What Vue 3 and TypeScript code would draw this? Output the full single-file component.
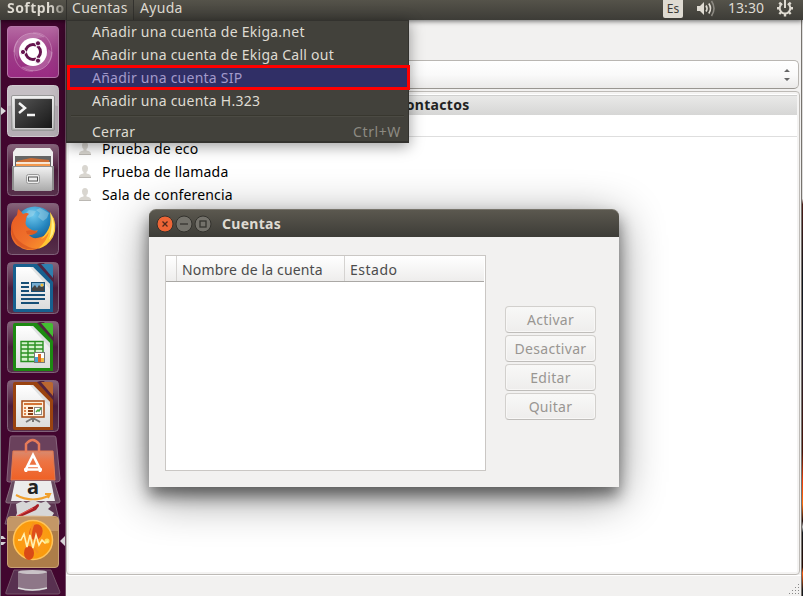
<script setup lang="ts">
interface MenuItem {
  label: string
  active?: boolean
}

const menuItems: MenuItem[] = [
  { label: 'Añadir una cuenta de Ekiga.net' },
  { label: 'Añadir una cuenta de Ekiga Call out' },
  { label: 'Añadir una cuenta SIP', active: true },
  { label: 'Añadir una cuenta H.323' },
]
const contacts: string[] = ['Prueba de eco', 'Prueba de llamada', 'Sala de conferencia']
const actions: string[] = ['Activar', 'Desactivar', 'Editar', 'Quitar']
const documents = [
  { kind: 'writer', edge: '#17608f', light: '#2f7fae' },
  { kind: 'calc', edge: '#1d8a12', light: '#43bd31' },
  { kind: 'impress', edge: '#9a4310', light: '#bb6730' },
]
</script>

<template>
  <div class="desktop">
    <header class="panel">
      <span class="app-title">Softpho</span>
      <span class="tab open">Cuentas</span>
      <span class="tab">Ayuda</span>
      <span class="spacer"></span>
      <span class="lang">Es</span>
      <svg class="speaker" width="20" height="18" viewBox="0 0 20 18">
        <path d="M1 6h3l4-4v13l-4-4H1z" fill="#dfdbd2" />
        <path d="M10 5.500q2 3 0 6M12.800 3.500q3.400 5 0 10" fill="none" stroke="#dfdbd2" stroke-width="1.700" />
        <path d="M15.500 1q5 7.500 0 15" fill="none" stroke="#8c8982" stroke-width="1.600" />
      </svg>
      <span class="clock">13:30</span>
      <svg class="gear" width="18" height="18" viewBox="0 0 18 18">
        <g fill="none" stroke="#dfdbd2">
          <path d="M6.200 3.700a5.300 5.300 0 1 0 5.600 0" stroke-width="2" />
          <path d="M9 0v8" stroke-width="2" />
          <path d="M1 8.300h3M14 8.300h3M9 13.500v3M3.300 14l2-2M14.700 14l-2-2M3.300 2.600l2 2M14.700 2.600l-2 2" stroke-width="2.400" />
        </g>
      </svg>
    </header>

    <div class="body">
      <nav class="launcher">
        <svg width="0" height="0" class="defs">
          <defs>
            <linearGradient id="glass" x1="0" y1="0" x2="0" y2="1">
              <stop offset="0" stop-color="#87647b" /><stop offset=".42" stop-color="#552846" />
              <stop offset=".5" stop-color="#491b3a" /><stop offset="1" stop-color="#57304b" />
            </linearGradient>
            <linearGradient id="silver" x1="0" y1="0" x2="0" y2="1">
              <stop offset="0" stop-color="#f1f1f1" /><stop offset="1" stop-color="#aaa" />
            </linearGradient>
            <linearGradient id="paper" x1="0" y1="0" x2="0" y2="1">
              <stop offset="0" stop-color="#fff" /><stop offset="1" stop-color="#dcdcdc" />
            </linearGradient>
            <linearGradient id="dash" x1="0" y1="0" x2="0" y2="1">
              <stop offset="0" stop-color="#b66aa3" /><stop offset=".5" stop-color="#9d3c87" /><stop offset="1" stop-color="#9a2b83" />
            </linearGradient>
            <linearGradient id="screen" x1="0" y1="0" x2="1" y2="1">
              <stop offset="0" stop-color="#555" /><stop offset=".5" stop-color="#353535" /><stop offset="1" stop-color="#181818" />
            </linearGradient>
            <radialGradient id="globe" cx=".45" cy=".2" r=".8">
              <stop offset="0" stop-color="#70caef" /><stop offset=".5" stop-color="#2384bd" /><stop offset="1" stop-color="#17436e" />
            </radialGradient>
            <linearGradient id="fox" x1="0" y1="0" x2="1" y2="1">
              <stop offset="0" stop-color="#e75822" /><stop offset=".55" stop-color="#f0712b" /><stop offset="1" stop-color="#ffa52b" />
            </linearGradient>
            <linearGradient id="bag" x1="0" y1="0" x2="0" y2="1">
              <stop offset="0" stop-color="#d88a70" /><stop offset=".35" stop-color="#ed7444" /><stop offset="1" stop-color="#ef6125" />
            </linearGradient>
            <radialGradient id="coin">
              <stop offset="0" stop-color="#ff9a25" /><stop offset="1" stop-color="#f99b0b" />
            </radialGradient>
          </defs>
        </svg>

        <svg class="tile" viewBox="0 0 52 52">
          <rect x=".5" y=".5" width="51" height="51" rx="3.500" fill="url(#dash)" stroke="#b777a9" />
          <path d="M7 26C7 10 24 2 37 11L26 13C16 14 11 20 11 34zM45 26C45 42 28 50 15 41l10-2q14-2 16-16z" fill="#dcb1d2" opacity=".3" />
          <path d="M7 26C7 10 24 2 37 11M26 7C42 5 50 25 41 37M45 26C45 42 28 50 15 41M26 45C10 47 2 27 11 15" fill="none" stroke="#d7a7cc" opacity=".5" />
          <circle cx="26" cy="26" r="14" fill="#fff" />
          <circle cx="26" cy="26" r="7.500" fill="none" stroke="#66144f" stroke-width="3" />
          <path d="M26 26H15M26 26l5.500-9.500M26 26l5.500 9.500" stroke="#fff" stroke-width="1.200" />
          <circle cx="26" cy="26" r="5.500" fill="#fff" />
          <g fill="#66144f" stroke="#fff" stroke-width="1">
            <circle cx="16" cy="26" r="2.600" /><circle cx="31" cy="17.300" r="2.600" /><circle cx="31" cy="34.700" r="2.600" />
          </g>
        </svg>

        <div class="slot">
          <svg class="tile" viewBox="0 0 52 52">
            <rect x=".5" y=".5" width="51" height="51" rx="4" fill="#b5aeb4" stroke="#d0cbd0" />
            <path d="M1 4q0-3 3-3h44q3 0 3 3v17q-25-6-50 0z" fill="#fff" opacity=".22" />
            <rect x="4.500" y="10.500" width="43" height="35" rx="1.500" fill="url(#silver)" stroke="#999" />
            <rect x="7" y="13" width="38" height="30" fill="#bbb" stroke="#eee" />
            <rect x="8" y="14" width="37" height="29" fill="url(#screen)" />
            <path d="M12 18l6 5-6 5M20 30h8" fill="none" stroke="#f5f5f5" stroke-width="2.500" />
          </svg>
          <svg class="running" width="5" height="8" viewBox="0 0 5 8"><path d="M0 0l5 4-5 4z" fill="#dedade" /></svg>
        </div>

        <svg class="tile" viewBox="0 0 52 52">
          <rect x=".5" y=".5" width="51" height="51" rx="4" fill="url(#glass)" stroke="#81627a" />
          <path d="M9 4h34l3 4v16H6V8z" fill="#eee" />
          <path d="M8 12h36v11H8z" fill="#656565" />
          <path d="M10 17l14-3 18 2v7H9z" fill="#cc6d34" />
          <path d="M9 18h34v3H9z" fill="#f7e5d3" /><path d="M9 20h34v4H9z" fill="#f3984d" />
          <path d="M5 22h42v24H5z" fill="#8f8f8f" /><rect x="7" y="23" width="38" height="24" rx="1" fill="url(#silver)" />
          <rect x="19.500" y="30.500" width="13" height="9" rx="2" fill="#eee" stroke="#999" />
          <rect x="21.500" y="33" width="9" height="4" fill="none" stroke="#555" />
        </svg>

        <svg class="tile" viewBox="0 0 52 52">
          <rect x=".5" y=".5" width="51" height="51" rx="4" fill="url(#glass)" stroke="#81627a" />
          <circle cx="28" cy="24" r="20.500" fill="url(#globe)" />
          <path d="M33 5l9 5-2 5-4 3-5-4 2-4-4-3zM22 7l7 1-3 5-5 2-4-3z" fill="#a7d4e6" opacity=".45" />
          <path d="M47 15q3 14-5 23c-8 9-21 12-29 6C6 41 3 33 4 26c0-7 3-11 6-14l1-6q3 2 5 5 4-2 6 0-3 2-3 6-2 6 4 9 4 3 8 1-3 5-9 5 4 5 12 2 7-2 10-10 1-5 0-9z" fill="url(#fox)" />
          <path d="M43 9q9 12 3 25-5 9-15 12 9-8 11-17-4 6-8 7 7-7 9-14 1-6 0-13z" fill="#ffc633" />
          <path d="M44 11q5 11 2 20l-4 6q4-13 2-26z" fill="#fff184" />
          <path d="M5 22q0 10 7 16 8 7 19 8Q14 49 7 36 3 29 5 22" fill="#cb461c" opacity=".5" />
          <path d="M19 28q6-2 12 1-4 4-11 2z" fill="#d6501c" opacity=".65" />
        </svg>

        <svg v-for="doc in documents" :key="doc.kind" class="tile" viewBox="0 0 52 52">
          <rect x=".5" y=".5" width="51" height="51" rx="4" fill="url(#glass)" stroke="#81627a" />
          <path d="M8 2h25l13 14v34H8q-2 0-2-2V4q0-2 2-2z" :fill="doc.edge" />
          <path d="M33 1h4l10 13v7L30 2z" fill="#522440" />
          <path d="M34 2h10q2 0 2 2v12z" :fill="doc.light" />
          <path d="M9 5h17l17 17v25H9z" fill="url(#paper)" />
          <path d="M26 5l17 17v5L23 5z" fill="#c6c9ca" opacity=".5" />
          <g v-if="doc.kind === 'writer'">
            <path d="M14 21h8M14 25h8M14 29h8M14 33h24M14 37h24M14 41h18" stroke="#174f76" stroke-width="2" />
            <rect x="24.500" y="20.500" width="13" height="9" fill="#75acd1" stroke="#174f76" />
            <path d="M25 29v-3l3-3 2 3 2-3 2 2 3-1v5z" fill="#444" /><circle cx="35" cy="23" r="1.500" fill="#f4bd32" />
          </g>
          <g v-else-if="doc.kind === 'calc'">
            <path d="M14 20h22v21H14z" fill="#d5f2cc" />
            <path d="M14 20.500h22v20H14zM14 24h22M14 28h22M14 32h22M14 36h22M21 20v21M28 20v21" fill="none" stroke="#299021" stroke-width="1.400" />
            <rect x="27.500" y="31.500" width="10" height="10" fill="#fff" stroke="#777" />
            <path d="M28 36h3v5h-3z" fill="#48a1d0" /><path d="M31 33h3v8h-3z" fill="#dd6723" /><path d="M34 37h3v4h-3z" fill="#f1b943" />
          </g>
          <g v-else>
            <path d="M26 38v4M26 38l-7 4M26 38l7 4" stroke="#777" stroke-width="2" />
            <rect x="15" y="21" width="22" height="16" fill="#fff0db" stroke="#a64b16" stroke-width="1.500" />
            <path d="M17 24h18" stroke="#d47536" stroke-width="2" />
            <path d="M17 28h2M17 31h2M17 34h2" stroke="#df834d" stroke-width="2" />
            <path d="M21 28h5M21 31h5M21 34h5" stroke="#883e16" stroke-width="2" />
            <rect x="27.500" y="27.500" width="7" height="7" fill="#fff" stroke="#888" />
            <path d="M29 32l2-2 1 1 2-3" fill="none" stroke="#45a13c" stroke-width="1.500" />
          </g>
        </svg>

        <svg class="folded" width="66" height="162" viewBox="0 0 66 162">
          <path d="M12 2h42q2 0 2 2l4 41q0 3-3 3H9q-3 0-2-3l3-41q0-2 2-2z" fill="#6a415c" stroke="#87657d" />
          <path d="M13 17h40l2 29H11z" fill="url(#bag)" stroke="#e17a50" />
          <path d="M26 19v-9q7-8 13 0v9" fill="none" stroke="#e77b59" stroke-width="2.500" />
          <path d="M26 38v-3l7-14 7 14v3M27 32h12M24 35.500h18" fill="none" stroke="#fff" stroke-width="2.600" />
          <path d="M12 47h42l6 20q0 2-2 2H8q-3 0-2-2z" fill="#684b60" stroke="#886c7e" />
          <path d="M15 47h36l4 20H11z" fill="#ececec" />
          <text x="33" y="60" class="amazon" text-anchor="middle">a</text>
          <path d="M16 61q17 9 34 0M45 60h5l-2 4" fill="none" stroke="#f0a02e" stroke-width="2" />
          <path d="M11 69h44l5 21H5z" fill="#5c3551" stroke="#7e6278" />
          <path d="M16 70l7-3 3 2 7-3 8 3 5-2 5 5-3 3 6 4-4 7-7-1-2 3H23l-8-4 2-5z" fill="#d7d7d7" />
          <path d="M13 84l22-12q4-4 4 0l-3 4-20 9q-4 1-3-1z" fill="#a71f24" /><path d="M15 83l18-9" stroke="#e95a50" />
          <rect x="7.500" y="82.500" width="51" height="51" rx="3.500" fill="#ad7d49" stroke="#c8a275" />
          <path d="M8 84q25-6 50 0v13H8z" fill="#ddb88b" opacity=".45" />
          <circle cx="33" cy="106" r="19.500" fill="url(#coin)" stroke="#ffc45b" stroke-width="1.500" />
          <ellipse cx="36" cy="98" rx="6.500" ry="8" fill="#df4e19" transform="rotate(20 36 98)" />
          <ellipse cx="29" cy="119" rx="5" ry="7" fill="#d94a17" />
          <path d="M34 89q-8 16 4 30" fill="none" stroke="#f79021" stroke-width="2" />
          <path d="M18 106l3 0 3-6 3 13 3-12 3 13 3-13 3 10 3-5 3 3 3-2" fill="none" stroke="#fff2b4" stroke-width="1.600" />
          <circle cx="47" cy="107" r="2.500" fill="#ffeb75" opacity=".8" />
          <path d="M65 102v10l-5-5zM1 102h2l3 3H1zM1 108h5l-3 3H1z" fill="#d6d2d6" />
          <path d="M14 136h37l9 22q0 2-2 2H7q-2 0-1-2z" fill="#583050" stroke="#745369" />
          <path d="M18 138h29v17q-14 4-29 0z" fill="#b2a6ae" opacity=".6" />
          <ellipse cx="32.500" cy="138" rx="14.500" ry="2" fill="#c9c3c7" />
          <path d="M18 154q14 4 29 0" fill="none" stroke="#ddd" stroke-width="1.500" />
        </svg>
      </nav>

      <main class="ekiga">
        <div class="combo">
          <svg width="6" height="12" viewBox="0 0 6 12"><path d="M0 3l3-3 3 3zM0 9h6l-3 3z" fill="#666" /></svg>
        </div>
        <section class="roster">
          <div class="roster-head">Contactos</div>
          <div class="group"></div>
          <div v-for="name in contacts" :key="name" class="contact">
            <svg width="12" height="13" viewBox="0 0 12 13">
              <path d="M6 0q3 0 3 3.500Q9 6 7.500 7v1.500Q12 9 12 12H0q0-3 4.500-3.500V7Q3 6 3 3.500 3 0 6 0z" fill="#d9d6d0" />
              <path d="M0 12.500h12" stroke="#bbb8b3" />
            </svg>
            <span>{{ name }}</span>
          </div>
        </section>
        <footer class="status">
          <svg width="11" height="11" viewBox="0 0 11 11">
            <path d="M9 0h1v1H9zM6 3h1v1H6zM9 3h1v1H9zM3 6h1v1H3zM6 6h1v1H6zM9 6h1v1H9zM0 9h1v1H0zM3 9h1v1H3zM6 9h1v1H6zM9 9h1v1H9z" fill="#888" />
          </svg>
        </footer>
      </main>
      <div class="wallpaper"></div>
    </div>

    <section class="dialog">
      <div class="titlebar">
        <svg width="56" height="18" viewBox="0 0 56 18">
          <circle cx="9" cy="9" r="8" fill="#ed6536" stroke="#33322d" />
          <path d="M6.500 6.500l5 5M11.500 6.500l-5 5" stroke="#4e291c" stroke-width="1.300" />
          <circle cx="28" cy="9" r="8" fill="#74726b" stroke="#33322d" /><path d="M24 9h8" stroke="#35342f" stroke-width="1.300" />
          <circle cx="47" cy="9" r="8" fill="#74726b" stroke="#33322d" /><rect x="44" y="6" width="6" height="6" fill="none" stroke="#35342f" stroke-width="1.300" />
        </svg>
        <span>Cuentas</span>
      </div>
      <div class="dialog-body">
        <div class="table">
          <div class="table-head"><i></i><span class="name">Nombre de la cuenta</span><span class="state">Estado</span></div>
        </div>
        <div class="buttons">
          <button v-for="action in actions" :key="action" disabled>{{ action }}</button>
        </div>
      </div>
    </section>

    <div class="menu">
      <div v-for="item in menuItems" :key="item.label" class="item" :class="{ active: item.active }">{{ item.label }}</div>
      <hr />
      <div class="item last"><span>Cerrar</span><span class="shortcut">Ctrl+W</span></div>
    </div>
  </div>
</template>

<style>
body { margin: 0; overflow: hidden; }
</style>

<style scoped>
* { box-sizing: border-box; }
.desktop { position: relative; width: 803px; height: 596px; overflow: hidden; display: flex; flex-direction: column; font: 14px/20px "Noto Sans", sans-serif; color: #111; }
.panel { height: 20px; flex: none; display: flex; background: linear-gradient(#55534a, #3d3c37); color: #dfdbd2; line-height: 16px; z-index: 1; box-shadow: 0 1px 5px #0009; }
.app-title { width: 66px; padding-left: 7px; font-weight: 700; letter-spacing: .45px; overflow: hidden; white-space: nowrap; background: linear-gradient(90deg, #dfdbd2 75%, #77746b 98%); background-clip: text; color: transparent; }
.tab { width: 68px; padding-left: 6px; letter-spacing: .3px; }
.tab.open { padding-left: 5px; border: solid #33322e; border-width: 0 1px; background: linear-gradient(#504e46, #42413b); }
.spacer { flex: 1; }
.lang { width: 20px; height: 18px; margin-right: 12px; border-radius: 0 0 2px 2px; background: #dfdbd2; color: #3c3b37; font-size: 12px; line-height: 17px; text-align: center; }
.lang { margin-left: -1px; position: relative; left: -1px; }
.speaker { margin-right: 12px; }
.clock { width: 38px; letter-spacing: .05px; margin-right: 10px; white-space: nowrap; }
.gear { margin-right: 9px; }
.body { flex: 1; min-height: 0; display: flex; }
.launcher { position: relative; width: 66px; flex: none; display: flex; flex-direction: column; align-items: center; padding-top: 6px; background: #42062f; border-left: 1px solid #77717a; border-right: 1px solid #765068; }
.defs { position: absolute; }
.tile { width: 52px; height: 52px; flex: none; display: block; margin-bottom: 7px; }
.slot { position: relative; }
.running { position: absolute; left: -6px; top: 22px; }
.folded { flex: none; margin-top: -5px; }
.amazon { font: 700 20px "Noto Sans", sans-serif; fill: #222; }
.ekiga { flex: 1; min-width: 0; display: flex; flex-direction: column; padding-top: 40px; background: #f2f1f0; }
.combo { height: 29px; flex: none; margin: 0 2px 2px 1px; padding-right: 8px; display: flex; align-items: center; justify-content: flex-end; border: 1px solid #b9b6b2; border-bottom-color: #999691; border-radius: 5px; background: linear-gradient(#fff, #fafafa 50%, #ebeae9); }
.roster { height: 484px; flex: none; margin-right: 1px; border: 1px solid #bdbab6; border-radius: 4px; padding: 3px 2px 2px; background: #fff; box-shadow: inset 0 0 0 2px #f4f3f2; }
.roster-head { height: 20px; background: linear-gradient(#e9e9e8, #d6d6d5); border-top: 1px solid #d0d0cf; text-align: center; font-weight: 700; letter-spacing: .3px; line-height: 18px; color: #222; }
.group { height: 22px; border-bottom: 1px solid #dedede; }
.contact { height: 23px; display: flex; align-items: center; padding-left: 10px; gap: 11px; letter-spacing: .17px; color: #000; }
.status { flex: 1; border-top: 1px solid #fff; display: flex; align-items: flex-end; justify-content: flex-end; padding: 0 1px 1px; }
.wallpaper { width: 2px; flex: none; border-left: 1px solid #77736e; background: linear-gradient(#ddd 31%, #491b17 32%, #10151c 45%, #28202b 60%, #4a1207 75%, #ef3e07 80%, #ff6b0b 84%, #200b0b 87%, #bbb 88%, #14171c 89%, #290901 95%, #ff5b0a 96%, #15171a 99%); }
.dialog { position: absolute; left: 149px; top: 209px; width: 470px; height: 278px; border-radius: 7px 7px 0 0; background: #f2f1f0; box-shadow: 0 9px 15px #0007, 0 10px 45px #0007; }
.titlebar { height: 28px; display: flex; align-items: center; gap: 10px; padding-left: 7px; border-radius: 7px 7px 0 0; background: linear-gradient(#5b584f, #3d3c37); border-top: 1px solid #77746b; color: #dfdbd2; font-weight: 700; letter-spacing: .3px; }
.dialog-body { height: 250px; padding: 18px 23px 16px 16px; display: flex; justify-content: space-between; }
.table { width: 321px; height: 216px; border: 1px solid #cac7c4; background: #fff; padding-right: 1px; }
.table-head { height: 26px; display: flex; line-height: 27px; background: linear-gradient(#fff, #eeedec); border-bottom: 1px solid #aaa8a5; color: #4c4c4c; }
.table-head i { width: 11px; border-right: 1px solid #d5d3d1; }
.table-head .name { width: 168px; padding-left: 5px; border-right: 1px solid #d5d3d1; letter-spacing: .15px; }
.table-head .state { padding-left: 5px; letter-spacing: .5px; }
.buttons { width: 91px; padding-top: 51px; display: flex; flex-direction: column; gap: 2px; }
button { height: 27px; flex: none; padding: 0; border: 1px solid #d2d0cd; border-bottom-color: #bfbdba; border-radius: 4px; background: linear-gradient(#f8f8f7, #eeedec); box-shadow: inset 0 0 0 1px #f8f7f6; color: #999692; font: 14px/25px "Noto Sans", sans-serif; letter-spacing: .3px; }
.menu { position: absolute; z-index: 2; left: 66px; top: 20px; width: 343px; height: 123px; background: #42413b; border: solid #33322e; border-width: 1px 1px 2px; color: #dfdbd2; box-shadow: 0 3px 14px #0006; }
.item { height: 23px; line-height: 22px; padding-left: 25px; letter-spacing: .25px; white-space: nowrap; }
.item.active { height: 25px; margin: -2px -1px 0 0; line-height: 19px; border: 3px solid #f00; padding-left: 22px; background: #302f66; color: #a39acb; width: 343px; }
.menu hr { margin: 2px 4px 4px; border: 0; height: 2px; background: #38372f; border-bottom: 1px solid #4b4a43; }
.last { display: flex; justify-content: space-between; padding-right: 7px; }
.shortcut { color: #8d8a82; letter-spacing: .6px; }
</style>
